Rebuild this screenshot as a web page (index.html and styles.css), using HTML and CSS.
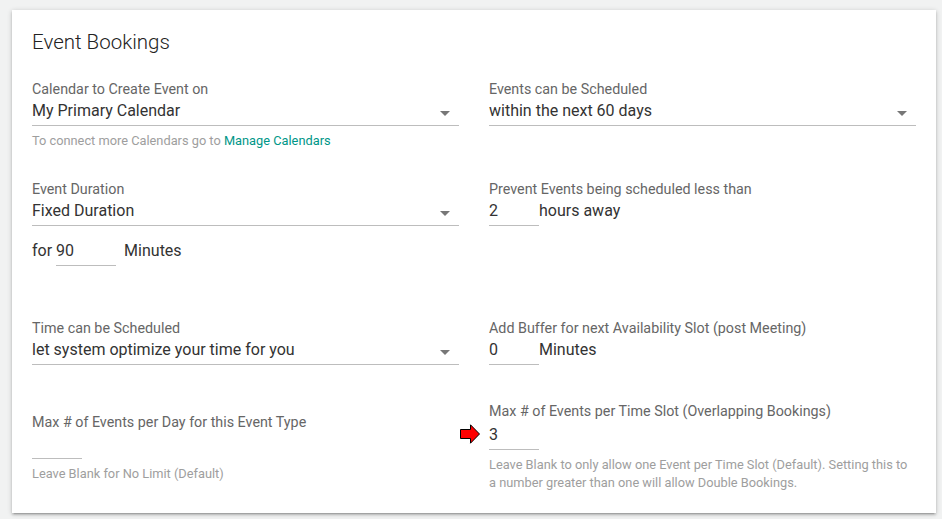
FILE: index.html
```html
<!DOCTYPE html>
<html>
<head>
<meta charset="utf-8">
<link rel="stylesheet" href="styles.css">
</head>
<body>
<div class="card">
  <h1 class="title">Event Bookings</h1>

  <div class="row row1">
    <div class="col">
      <div class="label">Calendar to Create Event on</div>
      <div class="select"><span>My Primary Calendar</span><i class="caret"></i></div>
      <div class="helper">To connect more Calendars go to <a class="link">Manage Calendars</a></div>
    </div>
    <div class="col">
      <div class="label">Events can be Scheduled</div>
      <div class="select"><span>within the next 60 days</span><i class="caret"></i></div>
    </div>
  </div>

  <div class="row row2">
    <div class="col">
      <div class="label">Event Duration</div>
      <div class="select"><span>Fixed Duration</span><i class="caret"></i></div>
      <div class="inline for-row">
        <span class="txt">for</span>
        <span class="input w60">90</span>
        <span class="txt after">Minutes</span>
      </div>
    </div>
    <div class="col">
      <div class="label">Prevent Events being scheduled less than</div>
      <div class="inline">
        <span class="input w50">2</span>
        <span class="txt">hours away</span>
      </div>
    </div>
  </div>

  <div class="row row3">
    <div class="col">
      <div class="label">Time can be Scheduled</div>
      <div class="select"><span>let system optimize your time for you</span><i class="caret"></i></div>
    </div>
    <div class="col">
      <div class="label">Add Buffer for next Availability Slot (post Meeting)</div>
      <div class="inline">
        <span class="input w50">0</span>
        <span class="txt">Minutes</span>
      </div>
    </div>
  </div>

  <div class="row row4">
    <div class="col">
      <div class="label rest">Max # of Events per Day for this Event Type</div>
      <div class="input w50 empty"></div>
      <div class="helper h2">Leave Blank for No Limit (Default)</div>
    </div>
    <div class="col">
      <div class="label">Max # of Events per Time Slot (Overlapping Bookings)</div>
      <div class="inline arrow-wrap">
        <svg class="arrow" width="21" height="20" viewBox="0 0 21 20"><path d="M0.5 5.5 H10.5 V0.8 L19.5 10 L10.5 19.2 V14.5 H0.5 Z" fill="#f00" stroke="#000" stroke-width="1"/></svg>
        <span class="input w50">3</span>
      </div>
      <div class="helper h3">Leave Blank to only allow one Event per Time Slot (Default). Setting this to a number greater than one will allow Double Bookings.</div>
    </div>
  </div>
</div>
</body>
</html>
```

FILE: styles.css
```css
html, body {
  margin: 0;
  padding: 0;
  background: #f1f2f2;
}
body {
  padding: 10px 6px 6px 12px;
  font-family: Roboto, "Noto Sans", sans-serif;
}
.card {
  width: 884px;
  background: #fff;
  padding: 20px 20px 21px 20px;
  box-shadow: 0 2px 2px 0 rgba(0,0,0,.14), 0 3px 1px -2px rgba(0,0,0,.12), 0 1px 5px 0 rgba(0,0,0,.2);
}
.title {
  margin: 0;
  font-size: 20.5px;
  line-height: 24px;
  font-weight: 300;
  color: #222;
}
.row {
  display: grid;
  grid-template-columns: 427px 427px;
  column-gap: 30px;
  align-items: start;
}
.row1 { margin-top: 25px; }
.row2 { margin-top: 29px; }
.row3 { margin-top: 52px; }
.row4 { margin-top: 36px; }
.label {
  font-size: 14.3px;
  line-height: 20px;
  color: #666;
}
.select {
  position: relative;
  font-size: 16px;
  line-height: 22px;
  color: #333;
  padding-top: 1px;
  padding-bottom: 3px;
  border-bottom: 1px solid #bdbdbd;
}
.caret {
  position: absolute;
  right: 9px;
  top: 12px;
  width: 0;
  height: 0;
  border-left: 5px solid transparent;
  border-right: 5px solid transparent;
  border-top: 5px solid #777;
}
.helper {
  font-size: 12.8px;
  line-height: 18px;
  color: #9e9e9e;
  margin-top: 6px;
}
.link { color: #009688; text-decoration: none; }
.inline {
  display: flex;
  align-items: flex-start;
  font-size: 16px;
  line-height: 22px;
  color: #333;
}
.for-row { margin-top: 13px; }
.txt { padding-top: 1px; }
.input {
  display: block;
  font-size: 16px;
  line-height: 22px;
  color: #333;
  padding-top: 1px;
  padding-bottom: 3px;
  border-bottom: 1px solid #bdbdbd;
  box-sizing: border-box;
  height: 27px;
}
.w60 { width: 60px; margin-left: 4px; }
.w50 { width: 50px; }
.after { margin-left: 8px; }
.label.rest { margin-top: 11px; }
.input.empty { margin-top: 0; }
.h2 { margin-top: 6px; }
.arrow-wrap { position: relative; margin-top: 2px; }
.arrow {
  position: absolute;
  left: -29px;
  top: 1px;
}
.h3 { margin-top: 6px; }
```
